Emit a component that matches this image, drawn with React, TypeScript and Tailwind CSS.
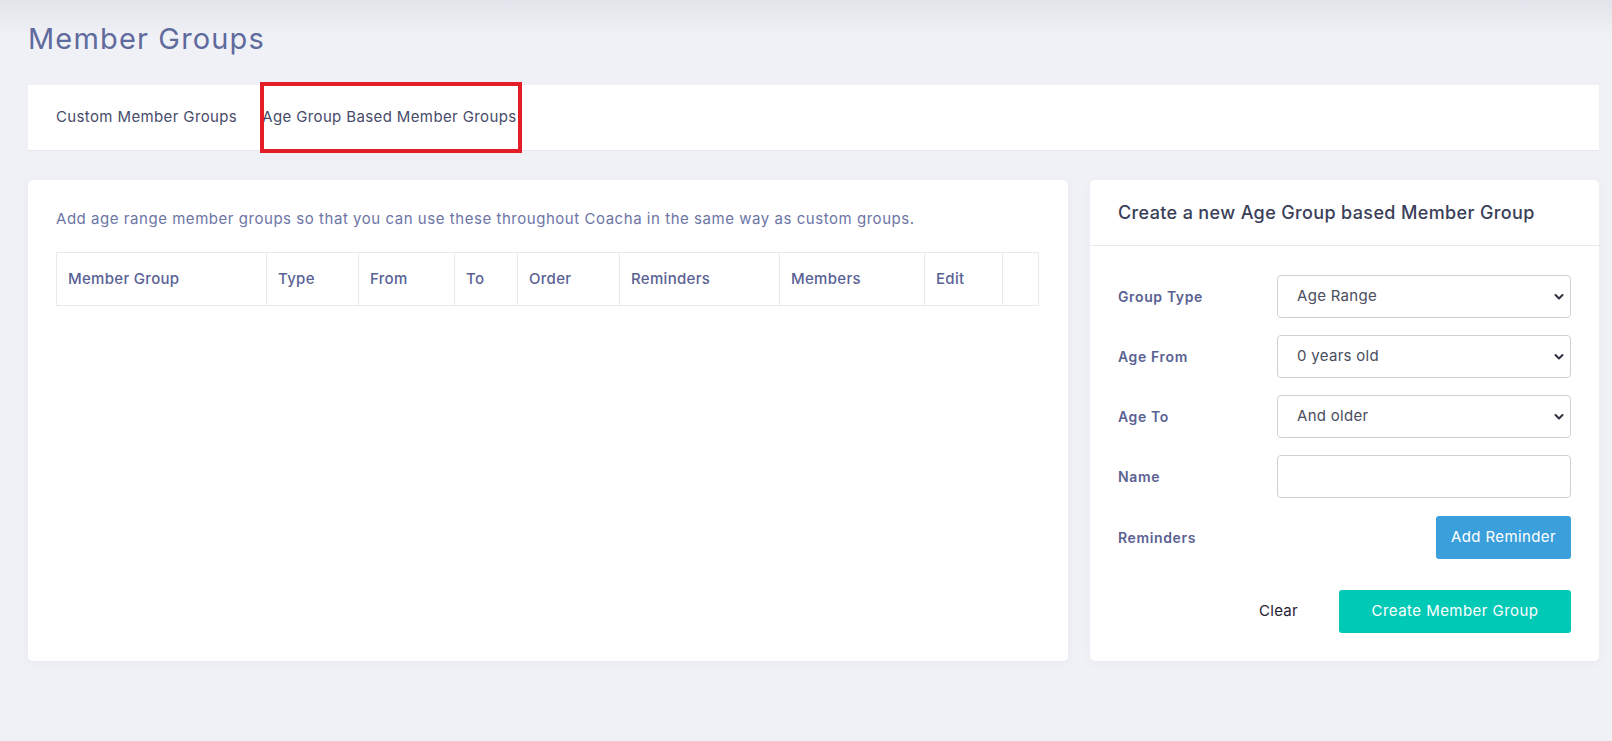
import React from "react";

const columns = [
  { label: "Member Group", w: "w-[210px]" },
  { label: "Type", w: "w-[92px]" },
  { label: "From", w: "w-[96px]" },
  { label: "To", w: "w-[63px]" },
  { label: "Order", w: "w-[102px]" },
  { label: "Reminders", w: "w-[160px]" },
  { label: "Members", w: "w-[145px]" },
  { label: "Edit", w: "w-[78px]" },
  { label: "", w: "" },
];

function Chevron() {
  return (
    <svg
      className="pointer-events-none absolute right-[7px] top-1/2 -translate-y-1/2"
      width="10"
      height="7"
      viewBox="0 0 10 7"
      fill="none"
    >
      <path d="M1.5 1.5L5 5L8.5 1.5" stroke="#2e3040" strokeWidth="2" strokeLinecap="round" strokeLinejoin="round" />
    </svg>
  );
}

function SelectField({ value }: { value: string }) {
  return (
    <div className="relative w-[294px]">
      <select
        defaultValue={value}
        className="h-[43px] w-full appearance-none rounded-[4px] border border-[#cfd0d6] bg-white pl-[19px] pr-8 text-[15px] tracking-[0.02em] text-[#4a4d60] outline-none"
      >
        <option>{value}</option>
      </select>
      <Chevron />
    </div>
  );
}

function FormRow({ label, children }: { label: string; children: React.ReactNode }) {
  return (
    <div className="flex items-center justify-between">
      <label className="text-[14px] font-semibold tracking-[0.045em] text-[#5a6293]">{label}</label>
      {children}
    </div>
  );
}

export default function App() {
  return (
    <div
      className="min-h-[741px] bg-[#f0f1f6] bg-[linear-gradient(to_bottom,#e3e3eb_0px,#f0f1f6_36px)] pl-[28px] pr-[13px] pt-[21px] pb-10"
      style={{ fontFamily: "Inter, 'Open Sans', sans-serif" }}
    >
      <h1 className="text-[29px] leading-[36px] tracking-[0.04em] text-[#5f6a9d]">Member Groups</h1>

      {/* tabs */}
      <div className="mt-[28px] flex h-[66px] items-stretch border-b border-[#e4e5ed] bg-white pl-[28px]">
        <button className="text-[15px] tracking-[0.025em] text-[#464b69]">Custom Member Groups</button>
        <div className="relative ml-[25px] flex items-center">
          <button className="text-[15px] tracking-[0.025em] text-[#464b69]">Age Group Based Member Groups</button>
          {/* highlight box drawn over the active tab */}
          <span className="pointer-events-none absolute -left-[2px] -right-[5px] -top-[3px] -bottom-[3px] border-4 border-[#e41e26]" />
        </div>
      </div>

      <div className="mt-[29px] flex gap-[22px]">
        {/* table card */}
        <div className="w-[1040px] rounded-[5px] bg-white px-[28px] pt-[28px] shadow-[0_2px_10px_rgba(60,64,110,0.04)]">
          <p className="text-[15px] leading-[22px] tracking-[0.036em] text-[#6c75a6]">
            Add age range member groups so that you can use these throughout Coacha in the same way as custom groups.
          </p>
          <table className="mt-[22px] w-[983px] table-fixed border-collapse">
            <thead>
              <tr className="h-[53px]">
                {columns.map((c, i) => (
                  <th
                    key={i}
                    className={`${c.w} border border-[#e8e9f1] pl-[11px] text-left text-[15px] font-medium tracking-[0.02em] text-[#5a6295]`}
                  >
                    {c.label}
                  </th>
                ))}
              </tr>
            </thead>
          </table>
        </div>

        {/* create card */}
        <div className="w-[509px] rounded-[5px] bg-white shadow-[0_2px_10px_rgba(60,64,110,0.04)]">
          <div className="flex h-[66px] items-center border-b border-[#e9eaf0] px-[28px]">
            <h2 className="text-[18px] font-medium tracking-[0.02em] text-[#3a3e58]">
              Create a new Age Group based Member Group
            </h2>
          </div>
          <div className="flex flex-col gap-[17px] px-[28px] pt-[29px]">
            <FormRow label="Group Type">
              <SelectField value="Age Range" />
            </FormRow>
            <FormRow label="Age From">
              <SelectField value="0 years old" />
            </FormRow>
            <FormRow label="Age To">
              <SelectField value="And older" />
            </FormRow>
            <FormRow label="Name">
              <input className="h-[43px] w-[294px] rounded-[4px] border border-[#cfd0d6] bg-white px-[19px] outline-none" />
            </FormRow>
          </div>
          <div className="mt-[18px] flex items-center justify-between px-[28px]">
            <span className="text-[14px] font-semibold tracking-[0.045em] text-[#5a6293]">Reminders</span>
            <button className="h-[43px] w-[135px] rounded-[3px] bg-[#3b9fdc] text-[15px] tracking-[0.025em] text-white">
              Add Reminder
            </button>
          </div>
          <div className="mt-[31px] flex items-center justify-end gap-[41px] pb-[28px] pr-[28px]">
            <button className="text-[15px] tracking-[0.02em] text-[#1f2131]">Clear</button>
            <button className="h-[43px] w-[232px] rounded-[3px] bg-[#00c9b6] text-[15px] tracking-[0.03em] text-white">
              Create Member Group
            </button>
          </div>
        </div>
      </div>
    </div>
  );
}
